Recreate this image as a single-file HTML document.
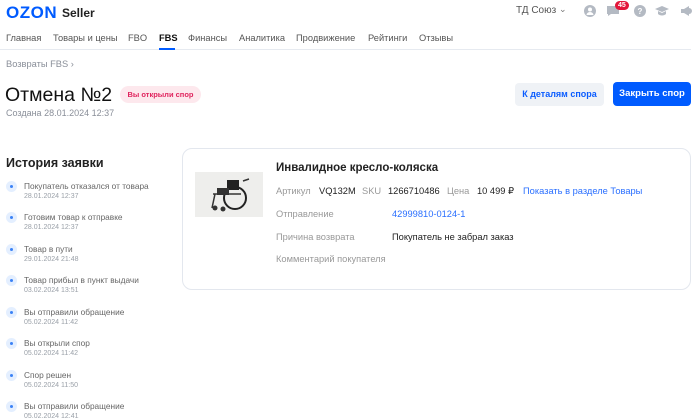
<!DOCTYPE html>
<html><head><meta charset="utf-8"><style>
*{margin:0;padding:0;box-sizing:border-box}
body{width:700px;height:416px;overflow:hidden;background:#fff;font-family:"Liberation Sans",sans-serif;color:#1a1a1a;position:relative}
.a{position:absolute;white-space:nowrap}
.nav{font-size:9.3px;color:#555;top:33px}
.g{color:#8a8f99}
.hi{position:absolute;left:6px}
.hi .d{position:absolute;left:0;top:0;width:11px;height:11px;border-radius:50%;background:#e4efff}
.hi .d:after{content:"";position:absolute;left:4px;top:4px;width:3px;height:3px;border-radius:50%;background:#3b82f6}
.hi .t{position:absolute;left:18px;top:0;font-size:8.3px;color:#666;white-space:nowrap}
.hi .s{position:absolute;left:18px;top:12px;font-size:7px;color:#9aa0a8;white-space:nowrap}
.lb{font-size:9.3px;color:#999}
.v{font-size:9.3px;color:#222}
</style></head><body>
<div class="a" style="left:6px;top:3px;font-size:17px;font-weight:bold;color:#005bff;letter-spacing:0.5px">OZON</div>
<div class="a" style="left:62px;top:6px;font-size:12px;font-weight:bold;color:#222">Seller</div>
<div class="a" style="left:516px;top:5px;font-size:10px;color:#555">ТД Союз</div>
<div class="a" style="left:559px;top:4px;font-size:9px;color:#777">⌄</div>
<svg class="a" style="left:583px;top:4px" width="14" height="14"><circle cx="7" cy="7" r="6" fill="#b4bac3"/><circle cx="7" cy="5.5" r="2" fill="#fff"/><path d="M3.5 11a3.5 3 0 0 1 7 0" fill="#fff"/></svg>
<svg class="a" style="left:606px;top:5px" width="14" height="12"><path d="M1 1h12v8H5l-3 2v-2H1z" fill="#b4bac3"/></svg>
<div class="a" style="left:615px;top:1px;background:#e3163a;color:#fff;font-size:7px;font-weight:bold;border-radius:6px;padding:1px 3px">45</div>
<svg class="a" style="left:633px;top:4px" width="14" height="14"><circle cx="7" cy="7" r="6" fill="#b4bac3"/><text x="4.5" y="10" font-size="8" font-weight="bold" fill="#fff" font-family="Liberation Sans">?</text></svg>
<svg class="a" style="left:654px;top:5px" width="16" height="12"><path d="M1 4l7-3 7 3-7 3z" fill="#b4bac3"/><path d="M4 6v3c2 2 6 2 8 0V6l-4 2z" fill="#b4bac3"/></svg>
<svg class="a" style="left:679px;top:4px" width="14" height="14"><path d="M2 5h3l5-3v10l-5-3H2z" fill="#b4bac3"/><circle cx="10" cy="7" r="3" fill="#b4bac3"/></svg>

<div class="a nav" style="left:6px">Главная</div>
<div class="a nav" style="left:53px">Товары и цены</div>
<div class="a nav" style="left:128px">FBO</div>
<div class="a nav" style="left:159px;color:#111;font-weight:bold">FBS</div>
<div class="a nav" style="left:188px">Финансы</div>
<div class="a nav" style="left:239px">Аналитика</div>
<div class="a nav" style="left:296px">Продвижение</div>
<div class="a nav" style="left:368px">Рейтинги</div>
<div class="a nav" style="left:419px">Отзывы</div>
<div class="a" style="left:0;top:49px;width:691px;height:1px;background:#e6eaf0"></div>
<div class="a" style="left:159px;top:48px;width:16px;height:2px;background:#005bff"></div>

<div class="a g" style="left:6px;top:59px;font-size:9.3px">Возвраты FBS ›</div>
<div class="a" style="left:5px;top:84px;font-size:19.5px;color:#111">Отмена №2</div>
<div class="a" style="left:120px;top:86px;width:81px;height:17px;border-radius:9px;background:#fde8ed;color:#e0245e;font-size:7.5px;font-weight:bold;text-align:center;line-height:17px">Вы открыли спор</div>
<div class="a g" style="left:6px;top:108px;font-size:9px">Создана 28.01.2024 12:37</div>

<div class="a" style="left:515px;top:83px;width:89px;height:23px;border-radius:4px;background:#eff2f6;color:#0a5cff;font-size:9px;font-weight:bold;text-align:center;line-height:23px">К деталям спора</div>
<div class="a" style="left:613px;top:82px;width:78px;height:24px;border-radius:4px;background:#005bff;color:#fff;font-size:9.5px;font-weight:bold;text-align:center;line-height:24px">Закрыть спор</div>

<div class="a" style="left:6px;top:156px;font-size:12.5px;font-weight:bold;color:#222">История заявки</div>
<div class="hi" style="top:181px"><div class="d"></div><div class="t">Покупатель отказался от товара</div><div class="s">28.01.2024 12:37</div></div>
<div class="hi" style="top:212px"><div class="d"></div><div class="t">Готовим товар к отправке</div><div class="s">28.01.2024 12:37</div></div>
<div class="hi" style="top:244px"><div class="d"></div><div class="t">Товар в пути</div><div class="s">29.01.2024 21:48</div></div>
<div class="hi" style="top:275px"><div class="d"></div><div class="t">Товар прибыл в пункт выдачи</div><div class="s">03.02.2024 13:51</div></div>
<div class="hi" style="top:307px"><div class="d"></div><div class="t">Вы отправили обращение</div><div class="s">05.02.2024 11:42</div></div>
<div class="hi" style="top:338px"><div class="d"></div><div class="t">Вы открыли спор</div><div class="s">05.02.2024 11:42</div></div>
<div class="hi" style="top:370px"><div class="d"></div><div class="t">Спор решен</div><div class="s">05.02.2024 11:50</div></div>
<div class="hi" style="top:401px"><div class="d"></div><div class="t">Вы отправили обращение</div><div class="s">05.02.2024 12:41</div></div>

<div class="a" style="left:182px;top:148px;width:509px;height:142px;border:1px solid #e3e7ee;border-radius:10px"></div>
<div class="a" style="left:195px;top:172px;width:68px;height:45px;background:#eeeeec"></div>
<svg class="a" style="left:205px;top:176px" width="48" height="38"><circle cx="30" cy="22" r="11" fill="none" stroke="#222" stroke-width="2"/><rect x="22" y="4" width="12" height="10" fill="#222"/><rect x="12" y="12" width="12" height="7" fill="#333"/><path d="M8 18h28M10 18l-3 14M38 5l6-2" stroke="#333" stroke-width="1.5"/><circle cx="10" cy="32" r="2.5" fill="#333"/><circle cx="18" cy="33" r="2.5" fill="#333"/></svg>
<div class="a" style="left:276px;top:162px;font-size:11.5px;font-weight:bold;color:#222">Инвалидное кресло-коляска</div>
<div class="a lb" style="left:276px;top:186px">Артикул</div>
<div class="a v" style="left:319px;top:186px">VQ132M</div>
<div class="a lb" style="left:362px;top:186px">SKU</div>
<div class="a v" style="left:388px;top:186px">1266710486</div>
<div class="a lb" style="left:447px;top:186px">Цена</div>
<div class="a v" style="left:477px;top:186px">10 499 ₽</div>
<div class="a" style="left:523px;top:186px;font-size:9.3px;color:#2a6fff">Показать в разделе Товары</div>
<div class="a lb" style="left:276px;top:209px">Отправление</div>
<div class="a" style="left:392px;top:209px;font-size:9.3px;color:#2a6fff">42999810-0124-1</div>
<div class="a lb" style="left:276px;top:232px">Причина возврата</div>
<div class="a v" style="left:392px;top:232px">Покупатель не забрал заказ</div>
<div class="a lb" style="left:276px;top:254px">Комментарий покупателя</div>
</body></html>
